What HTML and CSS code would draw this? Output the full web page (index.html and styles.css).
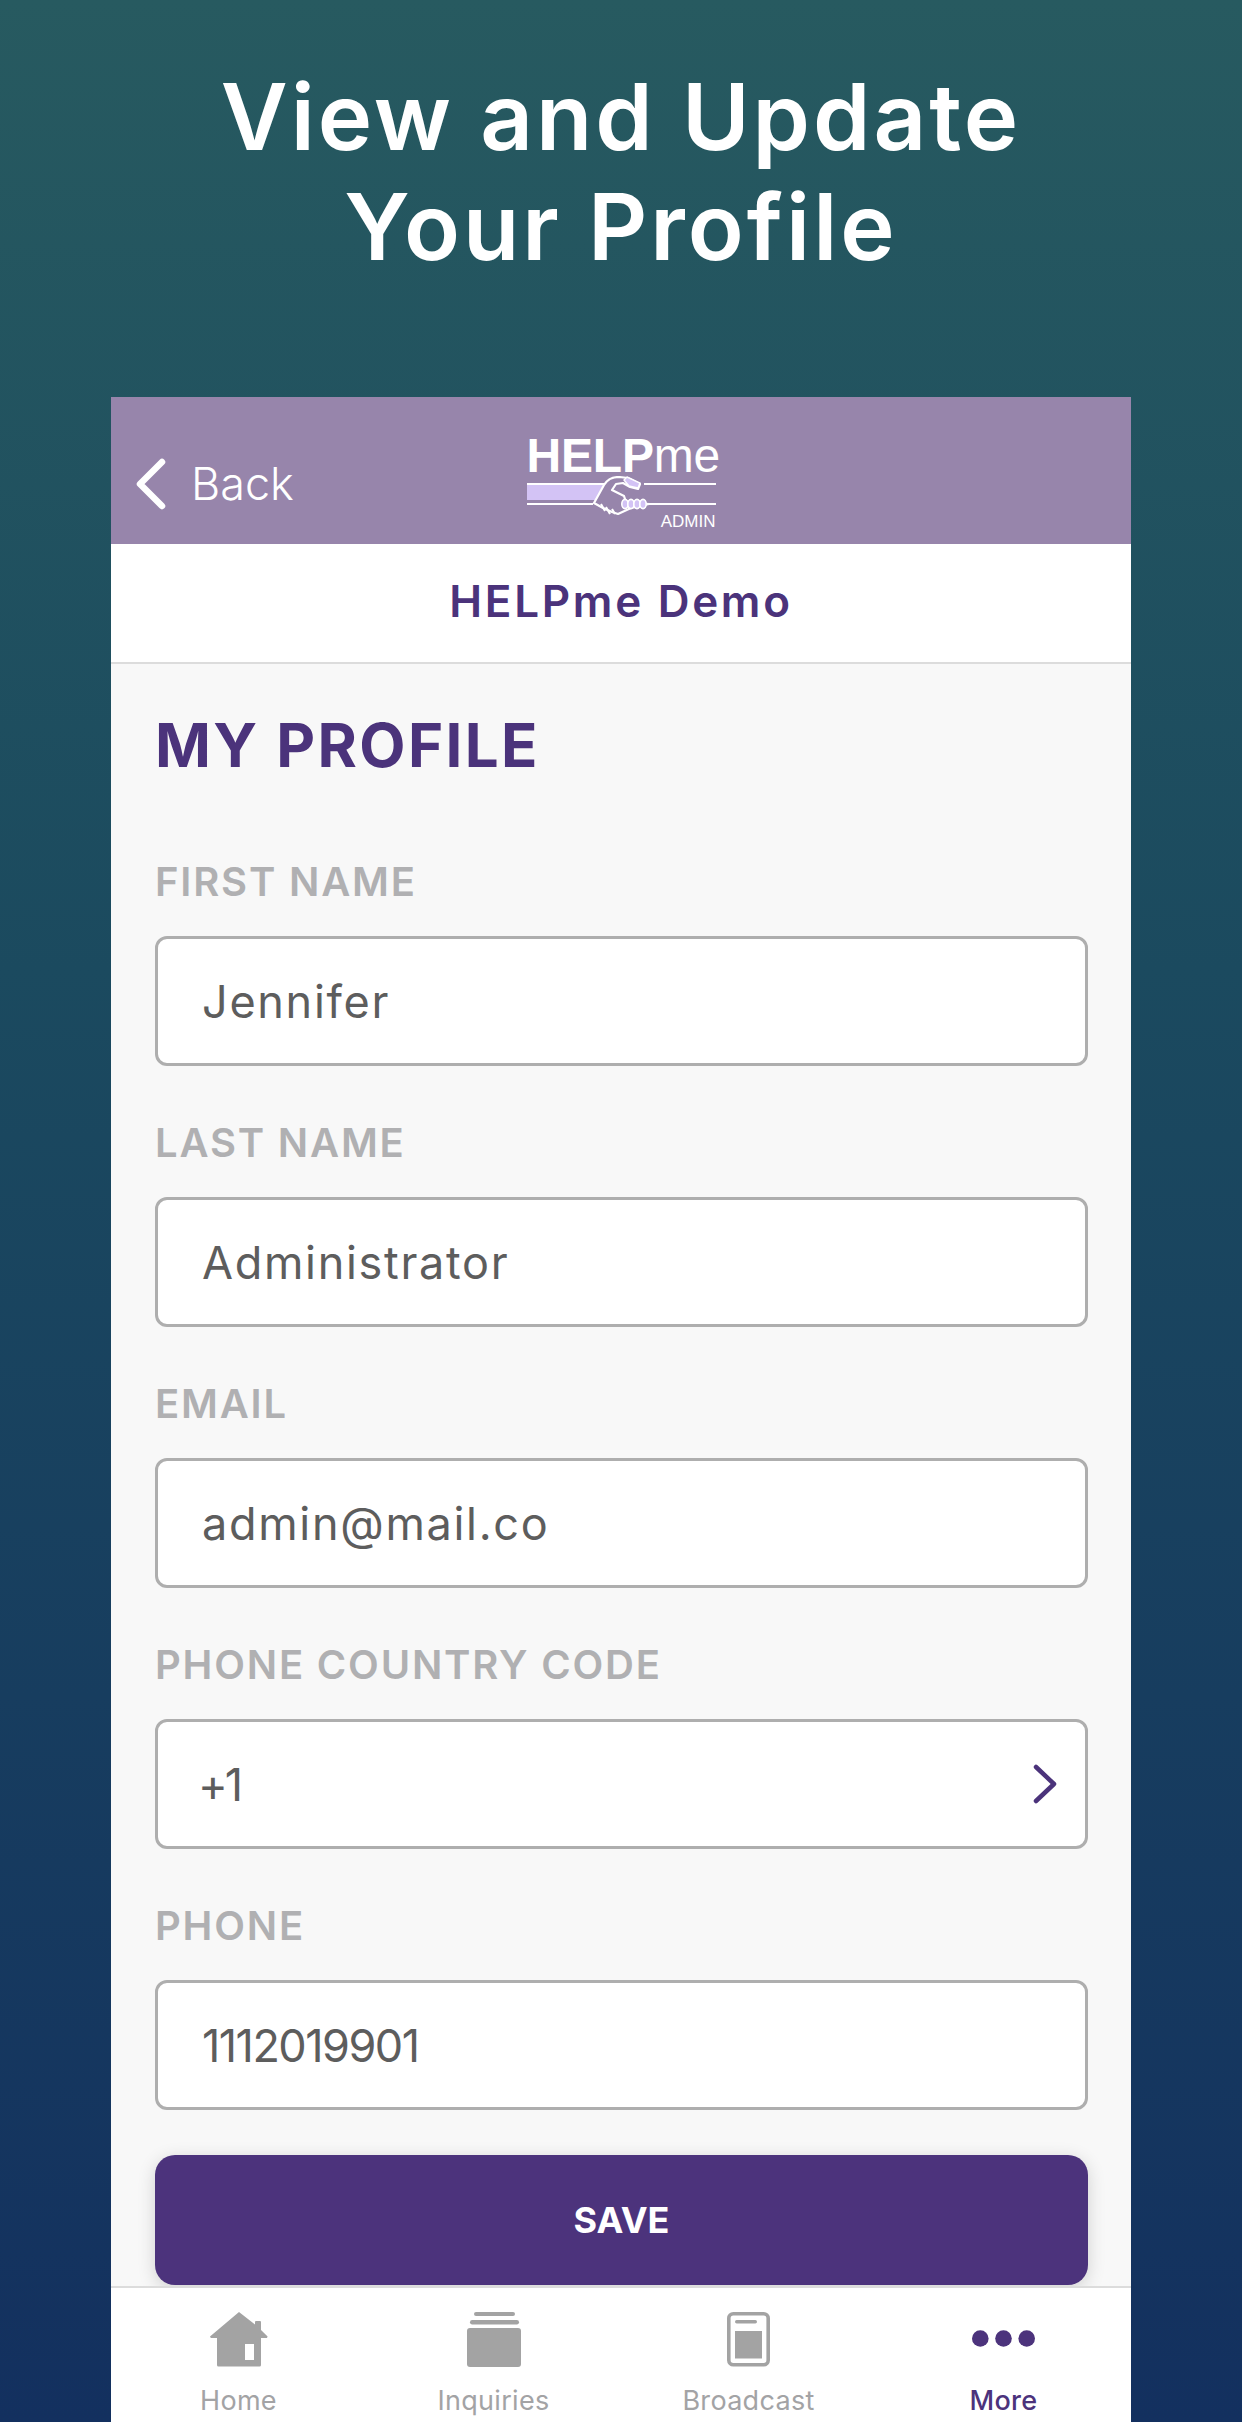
FILE: index.html
```html
<!DOCTYPE html>
<html lang="en">
<head>
<meta charset="utf-8">
<title>View and Update Your Profile</title>
<link rel="stylesheet" href="styles.css">
</head>
<body>
<h1 class="headline">View and Update<br>Your Profile</h1>
<main class="phone">
  <header class="navbar">
    <a class="back">
      <svg class="back-icon" viewBox="0 0 32 52"><path d="M27 4 5 26l22 22" fill="none" stroke="#fff" stroke-width="6.5" stroke-linecap="round" stroke-linejoin="round"/></svg>
      <span>Back</span>
    </a>
    <div class="logo">
      <div class="logo-word"><b>HELP</b>me</div>
      <svg class="logo-art" viewBox="0 0 189 40">
        <rect x="0" y="8" width="80" height="16" fill="#d3c3f5"/>
        <path d="M0 8H78M0 28H66M117 8H189M122 28H189" stroke="#fff" stroke-width="2" fill="none"/>
        <path d="M77 9C80 4 86 1 92 1L101 2 113 8 111 13 103 11 96 7 89 8 85 14 97 20 99 26 122 28 104 32 91 38 85 36 76 32 67 27Z" fill="#9785ab" stroke="#fff" stroke-width="2.2" stroke-linejoin="round"/>
        <path d="M100 1 113 7 111 12 102 10 97 4Z" fill="#d3c3f5" stroke="#fff" stroke-width="1.4"/>
        <path d="M74 28 78 35M79 31 83 38M85 33 88 38" stroke="#fff" stroke-width="2" fill="none"/>
        <g fill="#d3c3f5" stroke="#fff" stroke-width="1.6">
          <ellipse cx="98" cy="28" rx="3.2" ry="4.6"/><ellipse cx="104" cy="28" rx="3.2" ry="4.6"/><ellipse cx="110" cy="28" rx="3.2" ry="4.6"/><ellipse cx="116" cy="28" rx="3.2" ry="4.6"/>
        </g>
      </svg>
      <div class="logo-admin">ADMIN</div>
    </div>
  </header>
  <div class="subheader">HELPme Demo</div>
  <section class="content">
    <h2 class="page-title">MY PROFILE</h2>
    <div class="field">
      <label class="field-label">FIRST NAME</label>
      <div class="input">Jennifer</div>
    </div>
    <div class="field">
      <label class="field-label">LAST NAME</label>
      <div class="input">Administrator</div>
    </div>
    <div class="field">
      <label class="field-label">EMAIL</label>
      <div class="input">admin@mail.co</div>
    </div>
    <div class="field">
      <label class="field-label">PHONE COUNTRY CODE</label>
      <div class="input input-select">
        <span>+1</span>
        <svg class="chevron" viewBox="0 0 24 40"><path d="M3 3 21 20 3 37" fill="none" stroke="#4b337b" stroke-width="4.500" stroke-linecap="round" stroke-linejoin="round"/></svg>
      </div>
    </div>
    <div class="field">
      <label class="field-label">PHONE</label>
      <div class="input input-digits">1112019901</div>
    </div>
    <button class="save">SAVE</button>
  </section>
  <nav class="tabbar">
    <a class="tab">
      <svg class="tab-icon" width="58" height="56" viewBox="0 0 58 56"><path fill-rule="evenodd" d="M29 0 45 12.5V10a1 1 0 0 1 1-1h4a1 1 0 0 1 1 1v8l6.600 6.500-.6 1.500H51v27a1.500 1.500 0 0 1-1.500 1.500H8.500A1.500 1.500 0 0 1 7 53V26H.8L0 24.500ZM35 32v16h9V32Z" fill="#a3a3a3"/></svg>
      <span>Home</span>
    </a>
    <a class="tab">
      <svg class="tab-icon" width="54" height="56" viewBox="0 0 54 56"><g fill="#a3a3a3"><rect x="7" y="0" width="41" height="4" rx="2"/><rect x="3" y="8" width="49" height="4.500" rx="2.200"/><rect x="0" y="16" width="54" height="39" rx="3"/></g></svg>
      <span>Inquiries</span>
    </a>
    <a class="tab">
      <svg class="tab-icon" width="43" height="56" viewBox="0 0 43 56"><rect x="1.800" y="1.800" width="39.400" height="51" rx="4.500" fill="none" stroke="#a3a3a3" stroke-width="3.600"/><rect x="8" y="8" width="22" height="3.500" rx="1.700" fill="#a3a3a3"/><rect x="8" y="19" width="27" height="27.500" fill="#a3a3a3"/></svg>
      <span>Broadcast</span>
    </a>
    <a class="tab tab-active">
      <svg class="tab-icon" width="63" height="56" viewBox="0 0 63 56"><g fill="#4c337c"><circle cx="8.300" cy="26.500" r="8.300"/><circle cx="31.500" cy="26.500" r="8.300"/><circle cx="54.700" cy="26.500" r="8.300"/></g></svg>
      <span>More</span>
    </a>
  </nav>
</main>
</body>
</html>
```
FILE: styles.css
```css
* { box-sizing: border-box; }
html, body { margin: 0; height: 2422px; }
body {
  width: 1242px;
  overflow: hidden;
  display: flex;
  flex-direction: column;
  background: linear-gradient(180deg, #275a60 0%, #1b4a5f 40%, #13305f 100%);
  font-family: Inter, "Noto Sans", sans-serif;
}
.headline {
  margin: 0;
  height: 397px;
  padding-top: 62px;
  text-align: center;
  color: #fff;
  font-size: 92px;
  line-height: 110px;
  font-weight: 600;
  letter-spacing: 3px;
}
.phone {
  margin: 0 111px;
  flex: 1;
  display: flex;
  flex-direction: column;
  background: #f8f8f8;
  min-height: 0;
}
.navbar {
  height: 147px;
  flex: none;
  position: relative;
  display: flex;
  align-items: center;
  justify-content: center;
  background: #9785ab;
}
.back {
  position: absolute;
  left: 24px;
  top: 60px;
  display: flex;
  align-items: center;
  gap: 24px;
  color: #fff;
  font-size: 45px;
  line-height: 54px;
  font-weight: 300;
}
.back-icon { width: 32px; height: 52px; display: block; }
.logo {
  width: 189px;
  margin-top: 26px;
  color: #fff;
}
.logo-word {
  font-family: "Liberation Sans", Arial, sans-serif;
  font-size: 48px;
  line-height: 38px;
  letter-spacing: -0.200px;
  white-space: nowrap;
}
.logo-word b { font-weight: 700; }
.logo-art { display: block; width: 189px; height: 40px; margin-top: 1px; }
.logo-admin {
  font-family: "Liberation Sans", Arial, sans-serif;
  font-size: 17px;
  line-height: 18px;
  text-align: right;
  margin-top: -3px;
}
.subheader {
  height: 120px;
  flex: none;
  display: flex;
  align-items: center;
  justify-content: center;
  padding-bottom: 4px;
  background: #fff;
  border-bottom: 2px solid #dcdcdc;
  color: #4b337b;
  font-size: 44px;
  font-weight: 600;
  letter-spacing: 2.700px;
}
.content {
  flex: 1;
  min-height: 0;
  padding: 0 43px 0 44px;
}
.page-title {
  margin: 51px 0 87px;
  height: 60px;
  line-height: 60px;
  color: #4b337b;
  font-size: 60px;
  font-weight: 700;
  letter-spacing: 2.400px;
}
.field { height: 261px; }
.field-label {
  display: block;
  height: 74px;
  line-height: 40px;
  color: #b0b0b2;
  font-size: 40px;
  font-weight: 600;
  letter-spacing: 1.800px;
}
.input {
  height: 130px;
  display: flex;
  align-items: center;
  justify-content: space-between;
  padding: 0 44px 0 44px;
  background: #fff;
  border: 3px solid #aeaeae;
  border-radius: 12px;
  color: #5d5d5d;
  font-size: 45px;
  letter-spacing: 1.700px;
}
.input-digits { letter-spacing: -1.500px; }
.input-select { padding: 0 28px 0 40px; letter-spacing: -3px; }
.chevron { width: 24px; height: 40px; display: block; }
.save {
  display: block;
  width: 100%;
  height: 130px;
  margin-top: -12px;
  border: 0;
  border-radius: 20px;
  background: #4c337c;
  color: #fff;
  font-family: inherit;
  font-size: 36px;
  font-weight: 700;
  box-shadow: 0 4px 18px rgba(0, 0, 0, 0.16);
}
.tabbar {
  height: 136px;
  flex: none;
  position: relative;
  display: grid;
  grid-template-columns: repeat(4, 1fr);
  background: #fff;
  border-top: 2px solid #dcdcdc;
}
.tab {
  display: flex;
  flex-direction: column;
  align-items: center;
  padding-top: 24px;
  color: #a3a3a5;
  font-size: 27px;
  line-height: 34px;
  letter-spacing: 0.300px;
}
.tab-icon { display: block; margin-bottom: 16px; }
.tab-active { color: #4c337c; font-weight: 500; }
```
